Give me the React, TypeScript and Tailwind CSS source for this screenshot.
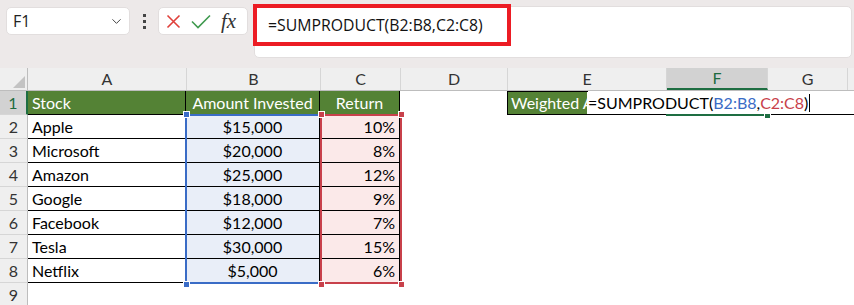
import { ChevronDown } from "lucide-react";

const cellFont = { fontFamily: "Lato, 'Open Sans', sans-serif" };

const cols = [
  { key: "A", w: "w-[159px]" },
  { key: "B", w: "w-[134px]" },
  { key: "C", w: "w-[80px]" },
  { key: "D", w: "w-[107px]" },
  { key: "E", w: "w-[159px]" },
  { key: "F", w: "w-[101px]" },
  { key: "G", w: "w-[80px]" },
];

const rows = [
  ["Apple", "$15,000", "10%"],
  ["Microsoft", "$20,000", "8%"],
  ["Amazon", "$25,000", "12%"],
  ["Google", "$18,000", "9%"],
  ["Facebook", "$12,000", "7%"],
  ["Tesla", "$30,000", "15%"],
  ["Netflix", "$5,000", "6%"],
];

function Handle({ className }: { className: string }) {
  return <div className={`absolute w-[7px] h-[7px] border border-white ${className}`} />;
}

function RowHeader({ n, active }: { n: number; active?: boolean }) {
  return (
    <div
      className={`w-[28px] shrink-0 h-full flex items-center justify-center border-b border-[#d6d6d6] ${
        active
          ? "bg-[#d2d2d2] text-[#1d6b3f] border-r-2 border-r-[#1e6e42]"
          : "bg-[#efefef] text-[#333] border-r border-r-[#bdbdbd]"
      }`}
    >
      {n}
    </div>
  );
}

export default function App() {
  return (
    <div className="w-[854px] h-[305px] overflow-hidden bg-white text-[16px] text-black" style={cellFont}>
      {/* formula bar */}
      <div className="relative h-[68px] bg-[#ede9e9] flex items-start">
        <div
          className="ml-[6px] mt-[7px] w-[124px] h-[28px] bg-white rounded-[5px] border border-[#e2dede] flex items-center justify-between pl-[6px] pr-[5px] text-[16px] text-[#222]"
          style={{ fontFamily: "'Open Sans', sans-serif" }}
        >
          <span>F1</span>
          <ChevronDown className="w-[15px] h-[15px] text-[#444]" strokeWidth={1.6} />
        </div>
        <div className="w-[28px] mt-[14px] flex flex-col items-center gap-[3px]">
          <div className="w-[3px] h-[3px] bg-[#444]" />
          <div className="w-[3px] h-[3px] bg-[#444]" />
          <div className="w-[3px] h-[3px] bg-[#444]" />
        </div>
        <div className="mt-[7px] w-[90px] h-[28px] bg-white rounded-[5px] border border-[#e2dede] flex items-center pl-[7px] gap-[10px]">
          <svg width="15" height="15" viewBox="0 0 15 15">
            <path d="M1.5 1.5 L13.5 13.5 M13.5 1.5 L1.5 13.5" stroke="#e0403a" strokeWidth="1.6" fill="none" />
          </svg>
          <svg width="20" height="15" viewBox="0 0 20 15">
            <path d="M1 7.5 L7 13.5 L19 1.5" stroke="#3f9a4f" strokeWidth="1.6" fill="none" />
          </svg>
          <span className="text-[21px] italic text-[#333] leading-none" style={{ fontFamily: "'Liberation Serif', serif" }}>
            fx
          </span>
        </div>
        <div
          className="ml-[6px] mt-[6px] flex-1 mr-[2px] h-[52px] bg-white rounded-[5px] border border-[#e2dede] pl-[13px] pt-[7px] text-[15.8px] text-[#111]"
          style={{ fontFamily: "'Open Sans', sans-serif" }}
        >
          =SUMPRODUCT(B2:B8,C2:C8)
        </div>
        <div className="absolute left-[253px] top-[4px] w-[258px] h-[42px] border-[4px] border-[#ec1c24]" />
      </div>

      {/* sheet */}
      <div className="relative">
        {/* column headers */}
        <div className="flex h-[23px] bg-[#efefef] border-b border-[#bdbdbd] text-[#333]">
          <div className="w-[28px] shrink-0 h-full border-r border-[#bdbdbd] flex items-end justify-end p-[2px]">
            <div className="w-0 h-0 border-l-[12px] border-l-transparent border-b-[12px] border-b-[#c3c3c3]" />
          </div>
          {cols.map((c) => (
            <div
              key={c.key}
              className={`${c.w} shrink-0 h-full flex items-center justify-center border-r border-[#d6d6d6] ${
                c.key === "F" ? "bg-[#d2d2d2] text-[#1d6b3f] border-b-2 border-b-[#1e6e42]" : ""
              }`}
            >
              {c.key}
            </div>
          ))}
          <div className="flex-1" />
        </div>

        {/* row 1 */}
        <div className="flex h-[24px]">
          <RowHeader n={1} active />
          <div className="w-[158px] shrink-0 bg-[#548235] text-white pl-[4px] flex items-center border-r border-b border-black">Stock</div>
          <div className="w-[134px] shrink-0 bg-[#548235] text-white flex items-center justify-center border-r border-b border-black">Amount Invested</div>
          <div className="w-[80px] shrink-0 bg-[#548235] text-white flex items-center justify-center border-r border-b border-black">Return</div>
          <div className="w-[107px] shrink-0" />
          <div className="w-[159px] shrink-0 flex border border-black">
            <div className="w-[79px] bg-[#548235] text-white pl-[3px] flex items-center whitespace-nowrap overflow-hidden">
              Weighted Average Return
            </div>
          </div>
          <div className="flex-1 border-b border-black" />
        </div>

        {/* data rows */}
        {rows.map((r, i) => (
          <div key={r[0]} className="flex h-[24px]">
            <RowHeader n={i + 2} />
            <div className="w-[158px] shrink-0 pl-[4px] flex items-center border-r border-b border-black">{r[0]}</div>
            <div className="w-[134px] shrink-0 bg-[#e9eef8] flex items-center justify-center border-r border-b border-black">{r[1]}</div>
            <div className="w-[80px] shrink-0 bg-[#fbe9e9] flex items-center justify-end pr-[4px] border-r border-b border-black">{r[2]}</div>
            <div className="flex-1" />
          </div>
        ))}

        {/* row 9 */}
        <div className="flex h-[24px]">
          <RowHeader n={9} />
          <div className="flex-1" />
        </div>

        {/* blue range B2:B8 */}
        <div className="absolute left-[185px] top-[46px] w-[137px] h-[170px] border-2 border-[#3a6cc6]" />
        {/* red range C2:C8 */}
        <div className="absolute left-[320px] top-[46px] w-[82px] h-[170px] border-2 border-[#c8414b]" />
        <Handle className="left-[183px] top-[43px] bg-[#3a6cc6]" />
        <Handle className="left-[183px] top-[213px] bg-[#3a6cc6]" />
        <Handle className="left-[318px] top-[43px] bg-[#c8414b]" />
        <Handle className="left-[318px] top-[213px] bg-[#c8414b]" />
        <Handle className="left-[398px] top-[43px] bg-[#c8414b]" />
        <Handle className="left-[398px] top-[213px] bg-[#c8414b]" />

        {/* F1 selection bottom */}
        <div className="absolute left-[666px] top-[46px] w-[98px] h-[2px] bg-[#1e6e42]" />
        <Handle className="left-[764px] top-[44px] bg-[#1e6e42]" />

        {/* in-cell editor */}
        <div className="absolute left-[588px] top-[23px] h-[23px] bg-white flex items-center whitespace-nowrap pr-[1px]">
          <span>=SUMPRODUCT(</span>
          <span className="text-[#3a6cc6]">B2:B8</span>
          <span>,</span>
          <span className="text-[#c8414b]">C2:C8</span>
          <span>)</span>
          <span className="ml-[1px] w-[1px] h-[18px] bg-black" />
        </div>
      </div>
    </div>
  );
}
